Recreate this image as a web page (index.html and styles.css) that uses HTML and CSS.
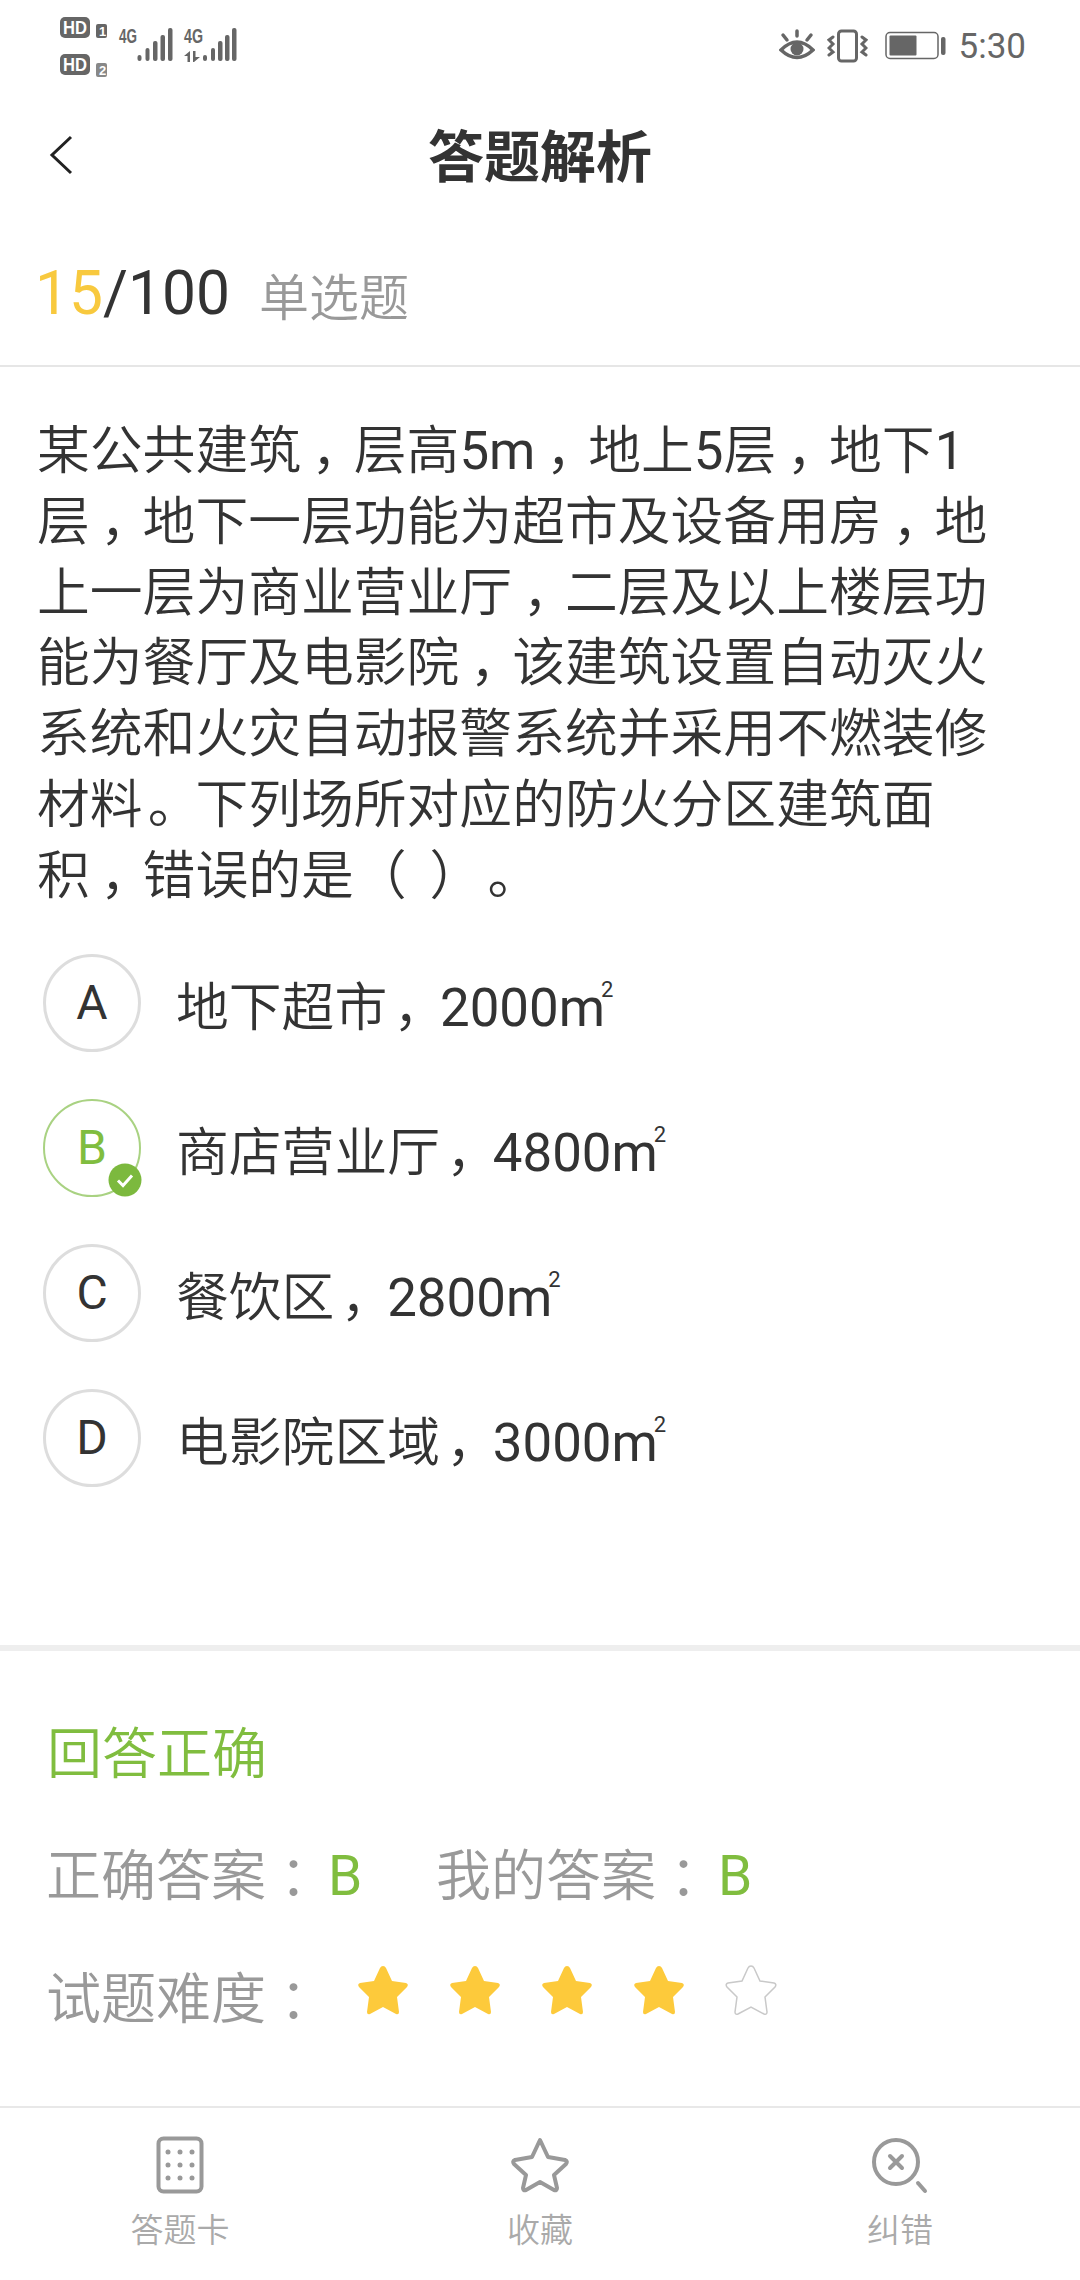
FILE: index.html
```html
<!DOCTYPE html>
<html lang="zh-CN">
<head>
<meta charset="utf-8">
<title>答题解析</title>
<link rel="stylesheet" href="styles.css">
</head>
<body>
<div class="page">
  <header class="status">
    <svg class="sb-left" width="190" height="70" viewBox="58 14 190 70">
      <g fill="#666">
        <rect x="60" y="18" width="30" height="21" rx="5"/>
        <rect x="60" y="55" width="30" height="21" rx="5"/>
        <rect x="96" y="25" width="11" height="14" rx="2"/>
        <rect x="96" y="64" width="11" height="14" rx="2" fill="#888"/>
        <rect x="137.500" y="56" width="4" height="6" rx="2"/><rect x="145.500" y="49" width="4" height="13" rx="2"/><rect x="153" y="42" width="4.500" height="20" rx="2"/><rect x="160.500" y="36" width="4.500" height="26" rx="2"/><rect x="168" y="29" width="4.500" height="33" rx="2"/>
        <rect x="203" y="56" width="4" height="6" rx="2"/><rect x="211" y="49" width="4" height="13" rx="2"/><rect x="218" y="42" width="4.500" height="20" rx="2"/><rect x="225" y="36" width="4.500" height="26" rx="2"/><rect x="232" y="29" width="4.500" height="33" rx="2"/>
        <path d="M190 52v11h-2.500v-6H184zM193 52h2.500v6H200l-6 5h-1z"/>
      </g>
      <g class="sb-t">
        <text class="w" x="63" y="35" textLength="24" lengthAdjust="spacingAndGlyphs">HD</text>
        <text class="w" x="63" y="72" textLength="24" lengthAdjust="spacingAndGlyphs">HD</text>
        <text class="w sm" x="99" y="37">1</text>
        <text class="w sm" x="99" y="76">2</text>
        <text class="g4" x="119" y="44" textLength="18" lengthAdjust="spacingAndGlyphs">4G</text>
        <text class="g4" x="184" y="44" textLength="19" lengthAdjust="spacingAndGlyphs">4G</text>
      </g>
    </svg>
    <div class="status-right">
      <svg class="ic-eye" width="36" height="34" viewBox="0 0 36 34" fill="none" stroke="#666" stroke-width="3.500" stroke-linecap="round">
        <path d="M2 21Q18 5 34 21Q18 36 2 21Z"/><circle cx="18" cy="20" r="6.500" fill="#666" stroke="none"/>
        <path d="M18 2v5M4 6l4 5M32 6l-4 5"/>
      </svg>
      <svg class="ic-phone" width="41" height="34" viewBox="0 0 41 34" fill="none" stroke="#666" stroke-linecap="round">
        <rect x="11.500" y="2" width="18" height="30" rx="3" stroke-width="3"/>
        <path d="M6 8l-4 3 4 4-4 4 4 4-4 3M35 8l4 3-4 4 4 4-4 4 4 3" stroke-width="3"/>
      </svg>
      <svg class="batt" width="62" height="30" viewBox="0 0 62 30">
        <rect x="1" y="1.500" width="52" height="26" rx="4" fill="none" stroke="#666" stroke-width="1.500"/>
        <rect x="4.500" y="4.500" width="27" height="20" rx="1" fill="#666"/>
        <rect x="56" y="6" width="4.500" height="18" rx="2" fill="#666"/>
      </svg>
      <span class="clock">5:30</span>
    </div>
  </header>

  <nav class="titlebar">
    <svg class="back" width="24" height="40" viewBox="0 0 24 40" fill="none" stroke="#222" stroke-width="3"><path d="M22 2L3 20l19 18"/></svg>
    <h1 class="title">答题解析</h1>
  </nav>

  <section class="score">
    <span class="num"><span class="cur">15</span>/100</span>
    <span class="type">单选题</span>
  </section>

  <section class="question">
    <p class="stem">某公共建筑<span class="cm">，</span>层高<span class="n">5m</span><span class="cm">，</span>地上<span class="n">5</span>层<span class="cm">，</span>地下<span class="n">1</span><br>层<span class="cm">，</span>地下一层功能为超市及设备用房<span class="cm">，</span>地<br>上一层为商业营业厅<span class="cm">，</span>二层及以上楼层功<br>能为餐厅及电影院<span class="cm">，</span>该建筑设置自动灭火<br>系统和火灾自动报警系统并采用不燃装修<br>材料<span class="pd">。</span>下列场所对应的防火分区建筑面<br>积<span class="cm">，</span>错误的是<span class="blank">（ ）</span><span class="pd">。</span></p>
    <ul class="options">
      <li class="option"><span class="badge">A</span><span class="otext">地下超市<span class="cm2">，</span><span class="n">2000</span><span class="unit n">m<sup>2</sup></span></span></li>
      <li class="option"><span class="badge ok">B<svg class="tick" width="34" height="34" viewBox="0 0 34 34"><circle cx="17" cy="17" r="16.500" fill="#7cb93e"/><path d="M10 17.500l5 5 9-10" fill="none" stroke="#fff" stroke-width="3"/></svg></span><span class="otext">商店营业厅<span class="cm2">，</span><span class="n">4800</span><span class="unit n">m<sup>2</sup></span></span></li>
      <li class="option"><span class="badge">C</span><span class="otext">餐饮区<span class="cm2">，</span><span class="n">2800</span><span class="unit n">m<sup>2</sup></span></span></li>
      <li class="option"><span class="badge">D</span><span class="otext">电影院区域<span class="cm2">，</span><span class="n">3000</span><span class="unit n">m<sup>2</sup></span></span></li>
    </ul>
  </section>

  <section class="result">
    <div class="verdict">回答正确</div>
    <div class="answers">
      <span class="lab lab-a">正确答案<span class="cl">：</span><b class="g">B</b></span>
      <span class="lab">我的答案<span class="cl">：</span><b class="g">B</b></span>
    </div>
    <div class="difficulty">
      <span class="lab">试题难度<span class="cl">：</span></span>
      <span class="stars">
        <svg class="star" viewBox="0 0 52 50"><path class="on" d="M26 1q2 0 3 2l6 13 14 2q3 1 1 4L40 32l2 15q0 3-3 2L26 42l-13 7q-3 1-3-2l2-15L2 22q-2-3 1-4l14-2 6-13q1-2 3-2z"/></svg>
        <svg class="star" viewBox="0 0 52 50"><path class="on" d="M26 1q2 0 3 2l6 13 14 2q3 1 1 4L40 32l2 15q0 3-3 2L26 42l-13 7q-3 1-3-2l2-15L2 22q-2-3 1-4l14-2 6-13q1-2 3-2z"/></svg>
        <svg class="star" viewBox="0 0 52 50"><path class="on" d="M26 1q2 0 3 2l6 13 14 2q3 1 1 4L40 32l2 15q0 3-3 2L26 42l-13 7q-3 1-3-2l2-15L2 22q-2-3 1-4l14-2 6-13q1-2 3-2z"/></svg>
        <svg class="star" viewBox="0 0 52 50"><path class="on" d="M26 1q2 0 3 2l6 13 14 2q3 1 1 4L40 32l2 15q0 3-3 2L26 42l-13 7q-3 1-3-2l2-15L2 22q-2-3 1-4l14-2 6-13q1-2 3-2z"/></svg>
        <svg class="star" viewBox="0 0 52 50"><path class="off" d="M26 1q2 0 3 2l6 13 14 2q3 1 1 4L40 32l2 15q0 3-3 2L26 42l-13 7q-3 1-3-2l2-15L2 22q-2-3 1-4l14-2 6-13q1-2 3-2z"/></svg>
      </span>
    </div>
  </section>

  <footer class="tabs">
    <div class="tab">
      <svg width="48" height="58" viewBox="0 0 48 58"><rect x="2.500" y="2.500" width="43" height="53" rx="5" fill="none" stroke="#999" stroke-width="4"/><g fill="#999"><circle cx="12" cy="16" r="2.500"/><circle cx="24" cy="16" r="2.500"/><circle cx="36" cy="16" r="2.500"/><circle cx="12" cy="29" r="2.500"/><circle cx="24" cy="29" r="2.500"/><circle cx="36" cy="29" r="2.500"/><circle cx="12" cy="42" r="2.500"/><circle cx="24" cy="42" r="2.500"/><circle cx="36" cy="42" r="2.500"/></g></svg>
      <span>答题卡</span>
    </div>
    <div class="tab">
      <svg width="58" height="56" viewBox="0 0 58 56"><path d="M29 3l8 17 17 3q3 1 1 4L43 38l3 13q0 3-3 2L29 45l-14 8q-3 1-3-2l3-13L3 27q-2-3 1-4l17-3z" fill="none" stroke="#999" stroke-width="4" stroke-linejoin="round"/></svg>
      <span>收藏</span>
    </div>
    <div class="tab">
      <svg width="58" height="56" viewBox="0 0 58 56" fill="none" stroke="#999" stroke-width="4" stroke-linecap="round"><circle cx="25" cy="25" r="22"/><path d="M19 19l12 12M31 19L19 31"/><path d="M47 46l7 8"/></svg>
      <span>纠错</span>
    </div>
  </footer>
</div>
</body>
</html>
```

FILE: styles.css
```css
* { box-sizing: border-box; }
html, body { margin: 0; padding: 0; }
body {
  width: 1080px;
  height: 2280px;
  background: #fff;
  font-family: Roboto, "Noto Sans CJK SC", sans-serif;
  color: #333;
  overflow: hidden;
  text-spacing-trim: space-all;
}
.page { width: 1080px; height: 2280px; display: flex; flex-direction: column; }

.status { height: 92px; display: flex; justify-content: space-between; padding: 0 54px 0 58px; }
.sb-left { margin-top: 13px; flex: none; }
.sb-t text { font-family: "Liberation Sans Narrow", "Liberation Sans", sans-serif; font-weight: 700; }
.w { fill: #fff; font-size: 18px; }
.sm { font-size: 13px; }
.g4 { fill: #666; font-size: 20px; }
.status-right { display: flex; align-items: center; height: 92px; }
.ic-phone { margin-left: 12px; }
.batt { margin-left: 17px; }
.clock { font-size: 35px; color: #666; margin-left: 12px; }

.titlebar { height: 128px; display: flex; align-items: center; justify-content: center; position: relative; }
.back { position: absolute; left: 49px; top: 43px; }
.title { margin: 3px 0 0; font-size: 56px; font-weight: 700; color: #333; line-height: 1; }

.score { height: 147px; border-bottom: 2px solid #e6e6e6; padding: 2px 0 0 35px; display: flex; align-items: center; }
.num { font-size: 60.500px; color: #333; }
.cur { color: #f8c93e; }
.type { font-size: 50px; color: #999; margin-left: 29px; font-weight: 350; }

.question { height: 1284px; padding: 49px 0 0; border-bottom: 6px solid #eee; }
.stem { margin: 0; padding: 0 40px 0 37px; font-size: 52.800px; line-height: 70.800px; color: #333; font-weight: 350; }
.n { font-weight: 400; }
.cm { margin-left: .2em; letter-spacing: -.2em; }
.cm2 { margin-left: .12em; letter-spacing: -.12em; }
.pd { margin-left: .1em; letter-spacing: -.1em; }
.blank { word-spacing: 10px; }
.options { list-style: none; margin: 42px 0 0; padding: 0 0 0 43px; display: flex; flex-direction: column; gap: 47px; }
.option { display: flex; align-items: center; height: 98px; }
.badge { position: relative; width: 98px; height: 98px; flex: none; border: 3px solid #ddd; border-radius: 50%; display: flex; align-items: center; justify-content: center; font-size: 48px; color: #333; }
.badge.ok { border: 2px solid #a9d282; color: #80bd3f; }
.tick { position: absolute; right: -3px; bottom: -2px; }
.otext { margin-left: 35px; font-size: 52.800px; color: #333; font-weight: 350; }
.unit { position: relative; }
.unit sup { position: absolute; left: 100%; top: 2px; margin-left: -4px; font-size: 22px; line-height: 1; }

.result { height: 455px; padding: 68px 0 0 47px; }
.verdict { font-size: 55px; line-height: 70px; color: #80bd3f; font-weight: 350; }
.lab { font-size: 55px; color: #999; flex: none; white-space: nowrap; font-weight: 350; }
.cl { margin-left: .25em; letter-spacing: -.25em; }
.g { font-weight: 400; color: #80bd3f; margin-left: 7px; }
.answers { margin: 52px 0 0 -1px; display: flex; line-height: 70px; }
.lab-a { width: 390px; }
.difficulty { margin: 53px 0 0 -1px; display: flex; line-height: 70px; }
.stars { display: flex; gap: 40px; margin-left: 36px; margin-top: 1px; height: 50px; }
.star { width: 52px; height: 50px; }
.on { fill: #fdca3b; }
.off { fill: none; stroke: #c9c9c9; stroke-width: 1.500; }

.tabs { flex: 1; border-top: 2px solid #e8e8e8; display: grid; grid-template-columns: repeat(3, 1fr); }
.tab { display: flex; flex-direction: column; align-items: center; padding-top: 28px; color: #aaa; font-size: 33px; line-height: 44px; font-weight: 350; }
.tab svg { height: 58px; margin-bottom: 15px; }
```
